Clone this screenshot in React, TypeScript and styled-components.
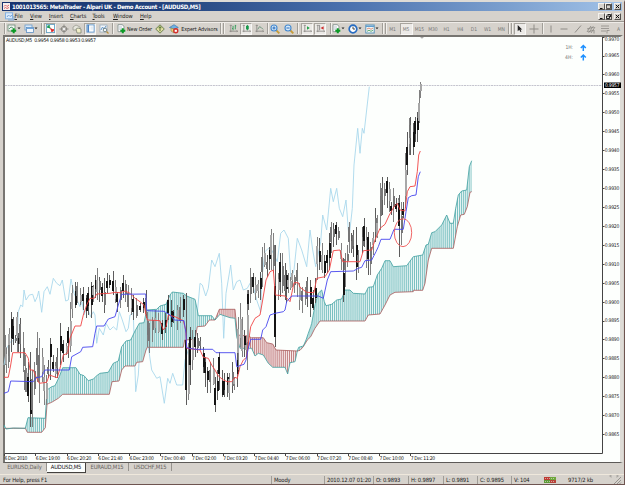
import React from 'react';
import styled, { createGlobalStyle } from 'styled-components';

const Global = createGlobalStyle`
  * { box-sizing: border-box; }
  html, body { margin: 0; padding: 0; overflow: hidden; }
  body { font-family: "DejaVu Sans Condensed", "DejaVu Sans", sans-serif; }
`;

const Frame = styled.div`
  width: 625px;
  height: 485px;
  display: flex;
  flex-direction: column;
  background: #d6d2cc;
  border-top: 2px solid #dedbd6;
  border-bottom: 1px solid #6e5450;
  border-right: 1px solid #6e5450;
  overflow: hidden;
  color: #222;
  white-space: nowrap;
`;

const TitleBar = styled.div`
  height: 9px;
  flex: none;
  margin: 0 2px 0 2px;
  display: flex;
  align-items: center;
  background: linear-gradient(90deg, #17336f 0%, #24457f 28%, #4a70ad 55%, #7ca0cf 82%, #a3c3e8 100%);
  color: #fff;
`;

const Title = styled.span`
  font: bold 6px/9px "DejaVu Sans Condensed", sans-serif;
  letter-spacing: -0.32px;
  margin-left: 1px;
  flex: 1;
`;

const WinButtons = styled.div`
  display: flex;
  gap: 0;
  margin-right: 1px;
  margin-left: auto;
`;

const WinButton = styled.div<{ $ml?: number }>`
  width: 7px;
  height: 7px;
  margin-left: ${p => p.$ml ?? 0}px;
  background: #d6d2cc;
  border: 1px solid;
  border-color: #f4f2ee #55524e #55524e #f4f2ee;
  svg { display: block; }
`;

const MenuBar = styled.div`
  height: 10px;
  flex: none;
  display: flex;
  align-items: center;
  padding-left: 4.5px;
  margin-right: 2px;
`;

const MenuItem = styled.span<{ $w: number }>`
  font: 5.7px/9px "DejaVu Sans Condensed", sans-serif;
  letter-spacing: -0.08px;
  width: ${p => p.$w}px;
  &::first-letter { text-decoration: underline; }
`;

const ToolBar = styled.div`
  height: 14px;
  flex: none;
  display: flex;
  align-items: center;
  padding-left: 4px;
  border-top: 1px solid #9b9892;
  box-shadow: inset 0 1px #efece8;
`;

const Tool = styled.div<{ $w: number; $ml?: number; $pressed?: boolean }>`
  flex: none;
  width: ${p => p.$w}px;
  height: 12px;
  margin-left: ${p => p.$ml ?? 0}px;
  display: flex;
  align-items: center;
  justify-content: center;
  font: 5.4px/10px "DejaVu Sans Condensed", sans-serif;
  letter-spacing: -0.1px;
  ${p => p.$pressed && 'background: #eceae7; border: 1px solid; border-color: #a8a59f #f8f7f5 #f8f7f5 #a8a59f;'}
  svg { display: block; flex: none; }
`;

const Period = styled(Tool)`
  color: #777;
  font-size: 5px;
`;

const Separator = styled.div<{ $ml?: number }>`
  flex: none;
  width: 2px;
  height: 11px;
  margin-left: ${p => p.$ml ?? 0}px;
  border-left: 1px solid #a19e98;
  border-right: 1px solid #f2f0ec;
`;

const ChartWindow = styled.div`
  flex: none;
  height: 428px;
  margin: 0 1px 0 3px;
  border-top: 2px solid #777571;
  border-left: 2px solid #777571;
  border-right: 3px solid #dedbd6;
  border-bottom: 1px solid #5c5a57;
  background: #fdfffd;
  svg { display: block; overflow: visible; }
`;

const TabRow = styled.div`
  flex: none;
  height: 10px;
  display: flex;
  padding-left: 3px;
`;

const Tab = styled.div<{ $w: number; $active?: boolean }>`
  width: ${p => p.$w}px;
  height: ${p => (p.$active ? 10 : 8)}px;
  text-align: center;
  font: 5.8px/9px "DejaVu Sans Condensed", sans-serif;
  letter-spacing: -0.18px;
  color: ${p => (p.$active ? '#111' : '#66625e')};
  background: ${p => (p.$active ? '#fdfffd' : 'transparent')};
  border-right: 1px solid ${p => (p.$active ? '#44423f' : '#96938e')};
  border-bottom: ${p => (p.$active ? '1px solid #44423f' : 'none')};
`;

const TabArrows = styled.div`
  margin: 1px 4px 0 auto;
`;

const StatusBar = styled.div`
  flex: 1;
  display: flex;
  align-items: center;
  margin-top: 1px;
  padding-left: 3px;
  border-top: 1px solid #efe8dc;
`;

const Status = styled.div<{ $w: number; $plain?: boolean }>`
  flex: none;
  width: ${p => p.$w}px;
  height: 8px;
  padding-left: ${p => (p.$plain ? 0 : 2)}px;
  border-left: ${p => (p.$plain ? 'none' : '1px solid #a09d97')};
  font: 5.8px/8px "DejaVu Sans Condensed", sans-serif;
  letter-spacing: -0.16px;
  svg { display: block; }
`;

/* ---------- icons ---------- */

type G = { children: React.ReactNode; s?: number };
const Glyph = ({ children, s = 10 }: G) => (
  <svg width={s} height={s} viewBox="0 0 10 10" fill="none">{children}</svg>
);
const Plus = ({ x, y }: { x: number; y: number }) => (
  <path d={`M${x - 2.5} ${y}h5M${x} ${y - 2.5}v5`} stroke="#0a9a24" strokeWidth="2" />
);
const Caret = () => (
  <svg width="4" height="3" viewBox="0 0 4 3"><path d="M0.5 0.6h3L2 2.3z" fill="#222" /></svg>
);
const Handle = ({ ml = 0 }: { ml?: number }) => <Separator $ml={ml} />;

const NewChart = () => (
  <Glyph><rect x="1" y="1" width="7" height="6" fill="#eef3ef" stroke="#6b8a78" strokeWidth=".8" /><path d="M2 5l2-2 2 1" stroke="#35845a" strokeWidth=".8" /><Plus x={6.7} y={6.8} /></Glyph>
);
const Profiles = () => (
  <Glyph><rect x="1" y="1" width="7" height="5" fill="#dcebfa" stroke="#6d9ccb" strokeWidth=".8" /><rect x="2.5" y="3.5" width="7" height="5" fill="#f3f8fd" stroke="#5d8fc4" strokeWidth=".8" /><path d="M3 4.5h6" stroke="#72a7dc" /></Glyph>
);
const MarketWatch = () => (
  <Glyph s={9}><rect x="0.5" y="0.5" width="9" height="9" fill="#fff" stroke="#69a5c5" /><path d="M2 2l3 3M2 2h2.5M2 2v2.5" stroke="#1d9b55" strokeWidth="1.3" /><path d="M8 8L5 5M8 8H5.5M8 8V5.5" stroke="#d22" strokeWidth="1.4" /></Glyph>
);
const DataWindow = () => (
  <Glyph><circle cx="5" cy="5" r="2.7" stroke="#8a8883" /><path d="M5 0.5v9M0.5 5h9" stroke="#8a8883" /><rect x="4" y="4" width="2" height="2" fill="#eee" /></Glyph>
);
const Navigator = () => (
  <Glyph><path d="M1 3l3-2 4 2v3H1z" fill="#e5e5dc" stroke="#9b9a90" strokeWidth=".8" /><path d="M4 5l2-1 3 1v4H5z" fill="#f1eec9" stroke="#7f8472" strokeWidth=".8" /></Glyph>
);
const Terminal = () => (
  <Glyph s={9}><rect x="1" y="1" width="8" height="8" fill="#fff" stroke="#5c94cb" /><path d="M2.5 1v8" stroke="#4c84c4" strokeWidth="1.8" /><path d="M5 3.5h3M5 5.5h3" stroke="#bcd" strokeWidth=".7" /></Glyph>
);
const Tester = () => (
  <Glyph><rect x="1" y="1" width="7" height="7" fill="#f4f7fa" stroke="#99acbf" strokeWidth=".8" /><path d="M2 6l1.5-3L5 5l2-3" stroke="#6295c8" /><circle cx="6" cy="6" r="1.8" stroke="#788" /><path d="M7.5 7.5l2 2" stroke="#b98f3e" strokeWidth="1.2" /></Glyph>
);
const NewOrder = () => (
  <Glyph><path d="M2 0.7h4.5l1.5 2v5H2z" fill="#fff" stroke="#8f9b98" /><path d="M3 3h3M3 5h3" stroke="#9ab" strokeWidth=".7" /><Plus x={6.8} y={6.8} /></Glyph>
);
const MetaEditor = () => (
  <Glyph><path d="M5 .8L9.3 5 5 9.2.7 5z" fill="#e4dfa4" stroke="#6d8352" /><path d="M5 2.7v4.5M3.5 4.2L5 2.7l1.5 1.5" stroke="#4c702f" /></Glyph>
);
const Expert = () => (
  <Glyph><path d="M.5 3.5L5 .7l4.3 2.8L5 5z" fill="#6fb1e4" stroke="#3d79ae" strokeWidth=".7" /><path d="M2 4v3l3 2V5z" fill="#e8cd72" stroke="#8e8355" strokeWidth=".6" /><circle cx="6.8" cy="6.8" r="2.7" fill="#d3312c" /><rect x="5.7" y="5.8" width="2.2" height="2" fill="#fff" /></Glyph>
);
const Axes = ({ children }: { children?: React.ReactNode }) => (
  <Glyph s={9}><path d="M2 1v8M.5 8H9.5M1 2l1-1 1 1M8.6 7l1 1-1 1" stroke="#7c7a75" strokeWidth=".8" />{children}</Glyph>
);
const Magnifier = ({ plus }: { plus?: boolean }) => (
  <Glyph><path d="M6 6l3.3 3.3" stroke="#c69c38" strokeWidth="1.8" /><circle cx="4" cy="4" r="3" fill="#d8ebfb" stroke="#4489cf" strokeWidth="1.1" /><path d={plus ? 'M2.4 4h3.2M4 2.4v3.2' : 'M2.4 4h3.2'} stroke="#2468ba" strokeWidth="1" /></Glyph>
);
const Clock = () => (
  <Glyph><circle cx="5" cy="5" r="3.8" fill="#fff" stroke="#276cc2" strokeWidth="1.7" /><path d="M5 2.6V5h2" stroke="#333" strokeWidth=".9" /></Glyph>
);
const Template = () => (
  <Glyph><rect x=".8" y="1" width="8.4" height="8" fill="#f3f8f6" stroke="#5b93b8" /><path d="M1 2.3h8" stroke="#5f9ed1" strokeWidth="1.4" /><path d="M2 5l2-1 2 1.3L8 4" stroke="#d0725c" strokeWidth=".8" /><path d="M2 7.3l2-1 2 1 2-1" stroke="#3c9858" strokeWidth=".8" /></Glyph>
);
const Stroke = ({ d, w = 1 }: { d: string; w?: number }) => (
  <Glyph><path d={d} stroke="#8f8c87" strokeWidth={w} /></Glyph>
);

/* ---------- chart data: x,y in thirds of a pixel from each section's origin ---------- */

type Pt = [number, number];
type Section = [number, number, string];

const trace = (sections: Section[]): Pt[] =>
  sections.flatMap(([ox, oy, s]) =>
    s.trim().split(/\s+/).map(p => {
      const [x, y] = p.split(',').map(Number);
      return [ox + x / 3, oy + y / 3] as Pt;
    }),
  );
const line = (pts: Pt[]) => pts.map(([x, y]) => `${x.toFixed(1)},${y.toFixed(1)}`).join(' ');

const tenkan = trace([
  [0, 255, '12,367 25,367 32,330 38,293 75,293 85,310 90,345 100,345 108,365 118,385 140,382 148,360 172,368 180,340 190,300 203,295 210,250 225,213 242,213 250,180 260,150 270,130 283,130 290,117 330,115 345,112 360,113 375,108 390,115 405,130 420,140 432,150 438,180'],
  [140, 270, '22,150 60,152 70,180 78,170 85,135 105,140 130,152 137,180 140,235 180,240 190,262 205,265 215,285 225,300 235,318 250,330 262,335 275,335 285,322 292,325 300,290 310,270 320,262 325,220 332,170 345,145 360,135 368,90'],
  [190, 190, '228,270 240,245 250,240 256,315 285,318 300,335 312,278 325,278 330,292 350,307 372,308 380,265 405,260 418,240 430,182 450,180 458,215 510,215'],
  [290, 75, '220,527 245,525 255,495 270,460 285,448 298,420 312,395 322,385 330,405 345,408 352,350 360,335 375,333 382,290 386,240 391,228'],
]);
const kijun = trace([
  [0, 255, '12,415 25,410 32,378 100,380 108,368 125,365 135,345 208,345 215,305 228,298 242,290 248,277 278,275 285,235 290,213 312,213 325,192 345,185 355,150 365,118 437,117 440,165'],
  [140, 270, '22,122 72,124 90,135 103,150 132,152 138,190 140,233 165,238 218,238 228,248 285,248 290,290 312,283 318,270 325,235 332,208 362,208 368,180 378,170 390,135 405,130 430,125'],
  [190, 190, '285,360 290,335 305,318 385,318 400,325 412,270 422,245 490,243 505,235 515,232 525,212'],
  [290, 75, '245,555 258,530 265,515 273,493 300,493 312,463 340,463 348,410 355,368 365,362 378,360 385,305 391,290'],
]);
const chikou = trace([
  [0, 255, '12,330 20,280 30,262 52,250 55,170 62,150 68,155 72,105 78,135 88,120 98,118 105,140 112,125 116,108 125,172 132,110 142,95 150,118 160,70 170,85 180,92 187,75 197,138 205,135 213,72 222,115 240,155 246,140 252,180 260,155 272,185 280,170 285,180 290,265 298,220 310,240 318,205 330,225 340,215 350,225 358,170 367,195 378,230 385,220 390,180 400,175 407,410 415,360 418,310 430,265 438,260'],
  [140, 270, '22,210 35,300 50,325 60,320 73,400 83,325 90,340 98,310 110,345 128,345 135,270 145,240 155,150 165,140 172,130 180,40 187,45 197,78 205,55'],
  [190, 190, '65,210 75,230 88,190 95,280 101,445 108,310 122,225 130,300 140,275 150,270 160,300 172,295 180,280 190,290 200,330 212,365 216,260 225,185 235,175 245,180 262,215 272,130 282,120 295,145 303,270 312,240 322,145 335,180 350,230 360,120 368,180 377,230'],
  [290, 75, '92,500 98,420 110,465 122,340 130,380 140,340 148,400 158,425 168,375 177,490 187,400 192,270 203,160 210,235 217,160 222,175 238,35'],
]);

const cloudOneA = trace([
  [0, 255, '12,510 18,522 40,519 76,520 84,488 136,490 141,405 155,395 165,392 178,365 188,338 228,338 240,358 252,362 265,377 280,372 290,362 300,355 325,352 340,325 355,318 365,275 378,258 392,255 405,228 418,205 432,203 440,165'],
  [140, 270, '50,118 60,108 78,103 90,75 97,66 130,70 140,78 165,88 172,120 175,137 215,137 225,150'],
]);
const cloudOneB = trace([
  [0, 255, '12,520 76,520 82,532 125,532 136,518 141,448 155,442 175,430 188,418 328,418 336,380 357,378 365,345 375,333 405,333 410,322 428,320 438,285 442,277'],
  [140, 270, '22,232 130,232 134,210 165,208 172,170 195,168 208,150 225,150'],
]);
const cloudTwoB = trace([[140, 270, '225,150 238,118 285,118 292,195 325,198 334,203 370,203 380,218 398,222 408,240 472,243']]);
const cloudTwoA = trace([[140, 270, '225,150 240,133 255,138 270,143 285,145 290,200 300,235 335,235 345,258 355,250 370,255 385,280 398,292 435,292 443,312 450,278 465,275 472,243']]);
const cloudThreeA = trace([
  [140, 270, '472,243 476,232 490,228 498,210 505,190 512,170'],
  [290, 75, '65,745 75,690 85,655 95,645 103,680 108,692 125,688 140,675 155,672 165,645 180,645 190,655 225,657 235,637 250,635 262,600 275,580 285,557 300,557 310,575 350,572 370,545 398,540'],
  [410, 75, '48,510 55,508 65,473 75,470 95,450 110,420 120,445 130,445 137,400 145,360 155,348 170,345 178,275 185,257'],
]);
const cloudThreeB = trace([
  [140, 270, '472,243 480,241 490,230 502,210 512,200 524,176'],
  [290, 75, '90,738 225,738 235,720 270,717 285,690 300,660 315,652 370,650'],
  [410, 75, '10,646 38,646 45,625 55,555 65,520 130,520 142,455 152,420 163,418 172,395 180,352 185,350'],
]);

/* x:high-low for each price bar */
const barData: Section[] = [
  [0, 255, '14:240-330 19:280-355 24:250-340 28:220-320 33:172-290 38:185-270 45:240-265 50:170-290 55:235-290 60:190-310 68:230-350 74:300-410 79:340-412 84:320-440 90:290-515 97:345-515 103:320-420 110:230-380 114:300-380 118:250-445 125:280-380 132:330-450 138:360-450 145:315-370 150:250-375 158:300-350 165:320-370 172:280-370 180:205-330 190:255-320 197:265-300 205:215-310 210:140-290 216:90-190 224:80-160 230:80-145 240:100-150 248:95-165 258:120-190 265:95-180 272:80-190 280:90-140 284:60-130 290:38-135 298:65-140 305:85-140 313:70-175 320:55-115 328:60-100 338:48-120 345:75-145 352:110-170 360:95-160 368:60-130 376:75-140 384:90-170 392:100-180 400:120-195 408:130-190 420:145-170 430:130-175 437:105-190 442:170-275'],
  [140, 270, '28:160-250 35:140-215 45:120-190 55:130-190 65:150-210 75:130-190 85:75-150 92:90-170 100:120-160 110:105-180 120:80-160 130:75-140 138:70-405 144:220-390 150:170-345 156:180-300 165:180-260 172:190-250 180:200-240 188:230-310 195:260-350 202:290-370 210:275-370 218:265-345 226:320-425 232:300-390 238:245-360 245:300-380 252:310-380 260:310-380 268:310-390 276:275-370 283:320-360 290:230-350 295:140-300 300:100-230 306:140-260 312:180-260 318:220-260 322:60-300'],
  [190, 190, '175:300-360 180:235-340 188:250-310 196:260-330 203:270-325 210:245-330 217:170-290 223:160-230 230:195-260 236:170-240 242:118-240 248:130-250 254:165-470 264:250-330 270:190-320 276:190-310 284:220-330 288:240-340 294:250-310 300:260-300 307:240-290 313:255-310 322:220-320 328:280-360 335:290-370 345:290-345 352:260-350 360:270-380 368:300-360 375:265-340 381:140-270 388:145-240 395:160-250 402:195-265 410:180-250 418:130-240 423:95-190 430:100-170 437:95-165 445:110-150 452:160-240 458:205-335 464:190-290 470:165-230 476:95-190 482:130-190 490:120-200 497:110-270 505:180-250 515:110-190 521:85-170 528:110-235'],
  [290, 75, '235:470-600 240:500-600 248:470-540 255:400-500 262:420-490 270:325-465 276:305-420 283:325-390 290:305-400 298:320-410 304:380-420 310:340-440 317:370-410 323:370-410 328:360-545 333:380-510 340:380-430 345:235-400 351:170-300 356:130-240 361:125-240 368:145-240 374:125-200 380:110-200 386:45-145 391:20-70'],
];

type Bar = { x: number; hi: number; lo: number };
const bars: Bar[] = barData.flatMap(([ox, oy, s]) =>
  s.split(' ').map(b => {
    const [x, hi, lo] = b.split(/[:-]/).map(Number);
    return { x: Math.round(ox + x / 3), hi: oy + hi / 3, lo: oy + lo / 3 };
  }),
);
const noise = (i: number) => {
  const v = Math.sin(i * 91.7 + 3.1) * 4375.5;
  return v - Math.floor(v);
};

const CandleBars = () => (
  <g shapeRendering="crispEdges">
    {bars.map((b, i) => {
      const h = b.lo - b.hi;
      const top = b.hi + h * (0.12 + 0.3 * noise(i));
      const bh = h * (0.3 + 0.25 * noise(i + 400));
      const tone = noise(i + 900);
      return (
        <g key={i}>
          <rect x={b.x} y={b.hi} width="1" height={h} fill={tone > 0.5 ? '#5c5c5c' : '#808080'} />
          <rect x={b.x - (i % 2)} y={top} width="2" height={bh} fill={tone > 0.62 ? '#141414' : tone > 0.25 ? '#767676' : '#a8a8a8'} />
        </g>
      );
    })}
  </g>
);

const Cloud = ({ a, b, hatch }: { a: Pt[]; b: Pt[]; hatch: string }) => (
  <g>
    <polygon points={line([...a, ...[...b].reverse()])} fill={`url(#${hatch})`} />
    <polyline points={line(b)} fill="none" stroke="#a85a5a" strokeWidth=".8" />
    <polyline points={line(a)} fill="none" stroke="#3f9f9f" strokeWidth=".8" />
  </g>
);

const times = ['6 Dec 2010', '6 Dec 19:00', '6 Dec 20:20', '6 Dec 21:40', '6 Dec 23:00', '7 Dec 00:40', '7 Dec 02:00', '7 Dec 03:20', '7 Dec 04:40', '7 Dec 06:00', '7 Dec 07:20', '7 Dec 08:40', '7 Dec 10:00', '7 Dec 11:20'];
const labelFont = '"DejaVu Sans Condensed", "DejaVu Sans", sans-serif';

const Chart = () => (
  <svg width="616" height="425" viewBox="5 37 616 425" fontFamily={labelFont} fontSize="5" fill="#111">
    <defs>
      <pattern id="up" width="1.953" height="8" patternUnits="userSpaceOnUse">
        <rect width="1.953" height="8" fill="#f0f9f8" /><rect width="1" height="8" fill="#78bfc0" />
      </pattern>
      <pattern id="down" width="1.953" height="8" patternUnits="userSpaceOnUse">
        <rect width="1.953" height="8" fill="#fbf1f1" /><rect width="1" height="8" fill="#c07e80" />
      </pattern>
    </defs>
    <path d="M5 85.5H602" stroke="#c4c4ce" strokeDasharray="2 .7" />
    <polyline points={line(chikou)} fill="none" stroke="#a9d8ec" strokeWidth=".9" />
    <Cloud a={cloudOneA} b={cloudOneB} hatch="up" />
    <Cloud a={cloudTwoA} b={cloudTwoB} hatch="down" />
    <Cloud a={cloudThreeA} b={cloudThreeB} hatch="up" />
    <CandleBars />
    <polyline points={line(tenkan)} fill="none" stroke="#f04444" strokeWidth=".9" />
    <polyline points={line(kijun)} fill="none" stroke="#4646ee" strokeWidth=".9" />
    <ellipse cx="403" cy="232.7" rx="8.7" ry="14" fill="none" stroke="#ee5555" strokeWidth=".9" />
    <path d="M4.5 453.5H602.5V37" fill="none" stroke="#444" />
    <path d="M420 37h4l-2 1.8z" fill="#aaa" />
    <text x="6" y="42" fontSize="5.2" textLength="90" xmlSpace="preserve">AUDUSD,M5&#160; 0.9954 0.9958 0.9953 0.9957</text>
    <text x="565.5" y="49" fill="#777" textLength="7.5">1H:</text>
    <text x="565" y="59" fill="#777" textLength="8">4H:</text>
    <path d="M583.3 51v-5M580.8 48l2.5-2.5 2.5 2.5M583.3 60.5v-5M580.8 57.5l2.5-2.5 2.5 2.5" fill="none" stroke="#1e90ff" strokeWidth="1.5" />
    {Array.from({ length: 22 }, (_, i) => {
      const y = 36.6 + i * 18.93;
      return (
        <g key={i}>
          <path d={`M603 ${Math.round(y) + 0.5}h1.5`} stroke="#444" />
          <text x="604.8" y={i === 0 ? 40.8 : y + 1.9} textLength="14.5" fill="#222">{(0.997 - i * 0.0005).toFixed(4)}</text>
        </g>
      );
    })}
    <rect x="604" y="82.5" width="17" height="5.5" fill="#000" />
    <text x="605" y="87.1" textLength="14.5" fill="#fff">0.9957</text>
    {times.map((t, i) => {
      const x = 4 + i * 31.25;
      return (
        <g key={t}>
          <path d={`M${Math.round(x) + 0.5} 454v2`} stroke="#444" />
          <text x={x + 0.4} y="460" textLength={i === 0 ? 23 : 24.5}>{t}</text>
        </g>
      );
    })}
  </svg>
);

const WinControls = ({ restore }: { restore?: boolean }) => (
  <WinButtons>
    <WinButton><svg width="5" height="5"><path d="M1 4.5h2.5" stroke="#111" /></svg></WinButton>
    <WinButton><svg width="5" height="5" fill="none">{restore
      ? <path d="M1.5.5h3v2.5M.5 2h3v2.5h-3z" stroke="#111" strokeWidth=".9" />
      : <path d="M.5.5h4v4h-4zM.5 1h4" stroke="#333" strokeWidth=".8" />}</svg></WinButton>
    <WinButton $ml={2}><svg width="5" height="5"><path d="M.8.8l3.4 3.4M4.2.8L.8 4.2" stroke="#111" /></svg></WinButton>
  </WinButtons>
);

const menus: [string, number][] = [['File', 15.5], ['View', 19], ['Insert', 21], ['Charts', 22.5], ['Tools', 20.5], ['Window', 27], ['Help', 20]];

export default function App() {
  return (
    <>
      <Global />
      <Frame>
        <TitleBar>
          <svg width="9" height="9" viewBox="0 0 9 9"><rect x="1" y="1" width="7" height="7" fill="#f5eeee" /><path d="M2 4.5l1.5-1.5 1.5 1.5 2-1.5M2 6.5l1.5-1 1.5 1 2-1" fill="none" stroke="#d66" /></svg>
          <Title>1001013565: MetaTrader - Alpari UK - Demo Account - [AUDUSD,M5]</Title>
          <WinControls />
        </TitleBar>
        <MenuBar>
          <svg width="10" height="9" viewBox="0 0 10 9"><rect x=".5" y=".8" width="7" height="6" fill="#dcebfb" stroke="#85b2e2" /><path d="M2 5l1.5-2 1.5 1.5L7.5 3M3 8h6V4" fill="none" stroke="#7aa6d8" /></svg>
          {menus.map(([m, w]) => <MenuItem key={m} $w={w}>{m}</MenuItem>)}
          <WinControls restore />
        </MenuBar>
        <ToolBar>
          <Handle />
          <Tool $w={11}><NewChart /></Tool>
          <Tool $w={4}><Caret /></Tool>
          <Tool $w={10} $ml={3}><Profiles /></Tool>
          <Tool $w={4}><Caret /></Tool>
          <Separator $ml={3} />
          <Tool $w={12} $ml={1} $pressed><MarketWatch /></Tool>
          <Tool $w={11} $ml={2}><DataWindow /></Tool>
          <Tool $w={11} $ml={2}><Navigator /></Tool>
          <Tool $w={12} $ml={2} $pressed><Terminal /></Tool>
          <Tool $w={10} $ml={3}><Tester /></Tool>
          <Separator $ml={3} />
          <Tool $w={10} $ml={2}><NewOrder /></Tool>
          <Tool $w={27}>New Order</Tool>
          <Tool $w={10} $ml={2}><MetaEditor /></Tool>
          <Tool $w={10} $ml={4}><Expert /></Tool>
          <Tool $w={39} $ml={1}>Expert Advisors</Tool>
          <Separator $ml={1} /><Handle ml={1} />
          <Tool $w={10} $ml={3}><Axes><path d="M4.5 2v5M7 1v5M3.5 5h1M7 2h1" stroke="#2d9955" /></Axes></Tool>
          <Tool $w={12} $ml={2} $pressed><Axes><path d="M6 1v6" stroke="#178a3c" /><rect x="4.5" y="2" width="3" height="4" fill="#14984a" /></Axes></Tool>
          <Tool $w={10} $ml={2}><Axes><path d="M3 6l2-3 2 1 2 2" stroke="#659277" /></Axes></Tool>
          <Separator $ml={3} />
          <Tool $w={10} $ml={1}><Magnifier plus /></Tool>
          <Tool $w={10} $ml={3.5}><Magnifier /></Tool>
          <Separator $ml={3.5} />
          <Tool $w={12} $ml={2} $pressed><Axes><path d="M4.5 2.5v4L7.5 4.5z" fill="#1a9e42" /></Axes></Tool>
          <Tool $w={12} $ml={1} $pressed><Axes><path d="M4 1v6" stroke="#888" /><path d="M8.5 2.5v4L5 4.5z" fill="#cf3030" /></Axes></Tool>
          <Separator $ml={3.5} />
          <Tool $w={9} $ml={0}><NewOrder /></Tool>
          <Tool $w={4}><Caret /></Tool>
          <Tool $w={10} $ml={3}><Clock /></Tool>
          <Tool $w={4}><Caret /></Tool>
          <Tool $w={10} $ml={3}><Template /></Tool>
          <Tool $w={4}><Caret /></Tool>
          <Separator $ml={3} /><Handle ml={1} />
          <Period $w={12} $ml={0}>M1</Period>
          <Period $w={13} $ml={1} $pressed>M5</Period>
          {['M15', 'M30', 'H1', 'H4', 'D1', 'W1', 'MN'].map(p => <Period key={p} $w={13.65}>{p}</Period>)}
          <Separator /><Handle ml={1} />
          <Tool $w={12} $ml={1} $pressed><Glyph s={9}><path d="M3 1v7l1.8-1.5L6 9l1.2-.6L6 6h2z" fill="#222" /></Glyph></Tool>
          <Tool $w={12} $ml={2}><Stroke d="M5 .5v9M.5 5h9" /></Tool>
          <Separator $ml={2} />
          <Tool $w={10} $ml={2}><Stroke d="M5 1.5v7" /></Tool>
          <Tool $w={10} $ml={3.5}><Stroke d="M1.5 5h7" /></Tool>
          <Tool $w={10} $ml={3.5}><Stroke d="M2 8.5l6-7" /></Tool>
          <Tool $w={10} $ml={3.5}><Stroke d="M1 8l4-6M3 8.5l4-6M5 9l4-6M1 5l7-2M2 8l6-2M8 6v3.5" w={0.9} /></Tool>
          <Tool $w={10} $ml={3.5}><Stroke d="M1 2h8M1 4.5h8M1 7h5M7 6v3.5M7 6.5h2.5" w={0.8} /></Tool>
          <Period $w={10} $ml={3.5}>A</Period>
        </ToolBar>
        <ChartWindow><Chart /></ChartWindow>
        <TabRow>
          <Tab $w={44}>EURUSD,Daily</Tab>
          <Tab $w={39} $active>AUDUSD,M5</Tab>
          <Tab $w={43}>EURAUD,M15</Tab>
          <Tab $w={43}>USDCHF,M15</Tab>
          <TabArrows><svg width="12" height="6"><path d="M3.5 1v4L1 3zM8.5 1v4L11 3z" fill="#aaa7a2" /></svg></TabArrows>
        </TabRow>
        <StatusBar>
          <Status $w={268} $plain>For Help, press F1</Status>
          <Status $w={53}>Moody</Status>
          <Status $w={49}>2010.12.07 01:20</Status>
          <Status $w={35}>O: 0.9893</Status>
          <Status $w={35}>H: 0.9897</Status>
          <Status $w={34}>L: 0.9891</Status>
          <Status $w={34}>C: 0.9895</Status>
          <Status $w={33}>V: 104</Status>
          <Status $w={24} $plain>
            <svg width="12" height="7"><rect width="6" height="3" y="1" fill="#bd3b32" /><rect x="6" y="1" width="6" height="3" fill="#6ea53b" /><rect y="4" width="6" height="3" fill="#5e9a38" /><rect x="6" y="4" width="6" height="3" fill="#b8433a" /><path d="M1 2.5h10M1 5.5h10" stroke="#fff" strokeDasharray="1 1" strokeWidth=".5" /></svg>
          </Status>
          <Status $w={45} $plain>9717/2 kb</Status>
          <svg width="9" height="8"><path d="M1 8l7-7M4 8l4-4M6.5 8L8 6.5" stroke="#96938e" /></svg>
        </StatusBar>
      </Frame>
    </>
  );
}
